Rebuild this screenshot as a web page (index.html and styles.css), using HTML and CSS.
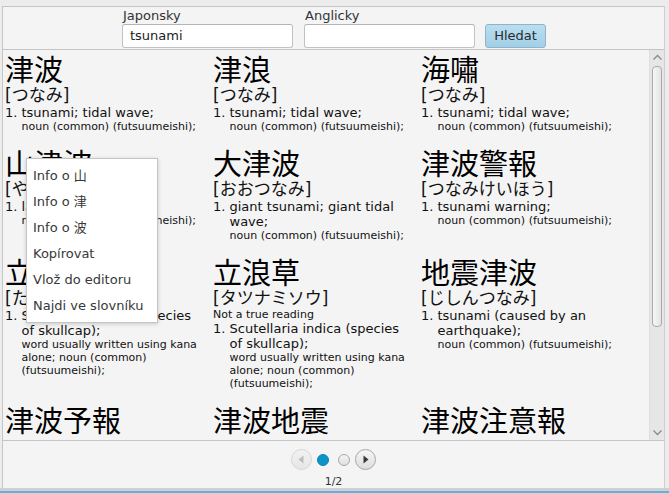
FILE: index.html
```html
<!DOCTYPE html>
<html>
<head>
<meta charset="utf-8">
<link rel="stylesheet" href="styles.css">
</head>
<body>
<div class="frame">
  <div class="header">
    <div class="field">
      <div class="label">Japonsky</div>
      <div class="input">tsunami</div>
    </div>
    <div class="field">
      <div class="label">Anglicky</div>
      <div class="input"></div>
    </div>
    <div class="button">Hledat</div>
  </div>
  <div class="pane">
    <div class="content">
      <div class="grid">
        <div class="entry">
          <div class="kanji">津波</div>
          <div class="reading">[つなみ]</div>
          <div class="sense"><span class="num">1.</span><div class="sb"><div class="gloss">tsunami; tidal wave;</div><div class="pos">noun (common) (futsuumeishi);</div></div></div>
        </div>
        <div class="entry">
          <div class="kanji">津浪</div>
          <div class="reading">[つなみ]</div>
          <div class="sense"><span class="num">1.</span><div class="sb"><div class="gloss">tsunami; tidal wave;</div><div class="pos">noun (common) (futsuumeishi);</div></div></div>
        </div>
        <div class="entry">
          <div class="kanji">海嘯</div>
          <div class="reading">[つなみ]</div>
          <div class="sense"><span class="num">1.</span><div class="sb"><div class="gloss">tsunami; tidal wave;</div><div class="pos">noun (common) (futsuumeishi);</div></div></div>
        </div>

        <div class="entry">
          <div class="kanji">山津波</div>
          <div class="reading">[やまつなみ]</div>
          <div class="sense"><span class="num">1.</span><div class="sb"><div class="gloss">landslide;</div><div class="pos">noun (common) (futsuumeishi);</div></div></div>
        </div>
        <div class="entry">
          <div class="kanji">大津波</div>
          <div class="reading">[おおつなみ]</div>
          <div class="sense"><span class="num">1.</span><div class="sb"><div class="gloss">giant tsunami; giant tidal wave;</div><div class="pos">noun (common) (futsuumeishi);</div></div></div>
        </div>
        <div class="entry">
          <div class="kanji">津波警報</div>
          <div class="reading">[つなみけいほう]</div>
          <div class="sense"><span class="num">1.</span><div class="sb"><div class="gloss">tsunami warning;</div><div class="pos">noun (common) (futsuumeishi);</div></div></div>
        </div>

        <div class="entry">
          <div class="kanji">立浪草</div>
          <div class="reading">[たつなみそう]</div>
          <div class="sense"><span class="num">1.</span><div class="sb"><div class="gloss">Scutellaria indica (species of skullcap);</div><div class="pos">word usually written using kana alone; noun (common) (futsuumeishi);</div></div></div>
        </div>
        <div class="entry">
          <div class="kanji">立浪草</div>
          <div class="reading">[タツナミソウ]</div>
          <div class="note">Not a true reading</div>
          <div class="sense"><span class="num">1.</span><div class="sb"><div class="gloss">Scutellaria indica (species of skullcap);</div><div class="pos">word usually written using kana alone; noun (common) (futsuumeishi);</div></div></div>
        </div>
        <div class="entry">
          <div class="kanji">地震津波</div>
          <div class="reading">[じしんつなみ]</div>
          <div class="sense"><span class="num">1.</span><div class="sb"><div class="gloss">tsunami (caused by an earthquake);</div><div class="pos">noun (common) (futsuumeishi);</div></div></div>
        </div>

        <div class="entry">
          <div class="kanji">津波予報</div>
        </div>
        <div class="entry">
          <div class="kanji">津波地震</div>
        </div>
        <div class="entry">
          <div class="kanji">津波注意報</div>
        </div>
      </div>
    </div>
    <div class="scrollbar">
      <svg class="arrow" width="11" height="7" viewBox="0 0 11 7"><path d="M1.5 5.5 L5.5 1.5 L9.5 5.5" fill="none" stroke="#8a8a8a" stroke-width="1.3"/></svg>
      <div class="track"><div class="thumb"></div></div>
      <svg class="arrow" width="11" height="7" viewBox="0 0 11 7"><path d="M1.5 1.5 L5.5 5.5 L9.5 1.5" fill="none" stroke="#8a8a8a" stroke-width="1.3"/></svg>
    </div>
  </div>
  <div class="pager">
    <div class="controls">
      <div class="nav disabled"><svg width="21" height="21" viewBox="0 0 21 21"><path d="M12.5 6.5 L7.5 10.5 L12.5 14.5 Z" fill="#bdbdbd"/></svg></div>
      <div class="dot active"></div>
      <div class="dot"></div>
      <div class="nav"><svg width="21" height="21" viewBox="0 0 21 21"><path d="M8.5 6.5 L13.5 10.5 L8.5 14.5 Z" fill="#3a3a3a"/></svg></div>
    </div>
    <div class="page">1/2</div>
  </div>
</div>
<div class="status"></div>

<div class="menu">
  <div class="item">Info o 山</div>
  <div class="item">Info o 津</div>
  <div class="item">Info o 波</div>
  <div class="item">Kopírovat</div>
  <div class="item">Vlož do editoru</div>
  <div class="item">Najdi ve slovníku</div>
</div>
</body>
</html>
```

FILE: styles.css
```css
html, body {
  margin: 0;
  padding: 0;
}
body {
  width: 669px;
  height: 493px;
  overflow: hidden;
  background: #ececec;
  font-family: "DejaVu Sans", "Noto Sans CJK JP", sans-serif;
  color: #111;
  position: relative;
}
.frame {
  margin: 6px 4px 0 2px;
  height: 482px;
  box-sizing: border-box;
  border-top: 1px solid #c6c6c6;
  border-left: 1px solid #c6c6c6;
  border-right: 1px solid #cfcfcf;
  background: #f4f4f4;
  display: flex;
  flex-direction: column;
}
.header {
  display: flex;
  align-items: flex-end;
  padding: 1px 0 1px 119px;
  gap: 11px;
}
.field {
  width: 171px;
  display: flex;
  flex-direction: column;
}
.label {
  font-size: 13px;
  line-height: 15px;
  color: #333;
  padding-left: 1px;
}
.input {
  margin-top: 1px;
  height: 24px;
  box-sizing: border-box;
  background: #fff;
  border: 1px solid #c2c2c2;
  border-top-color: #b4b4b4;
  border-radius: 3px;
  font-size: 13px;
  line-height: 22px;
  padding-left: 7px;
  color: #222;
}
.button {
  margin-left: -1px;
  width: 61px;
  height: 24px;
  box-sizing: border-box;
  border: 1px solid #8fb3c9;
  border-radius: 3px;
  background: linear-gradient(#b9def0, #a2d0e7);
  font-size: 13px;
  line-height: 22px;
  text-align: center;
  color: #2a2a2a;
}
.pane {
  flex: 1;
  min-height: 0;
  display: flex;
  border-top: 1px solid #c4c4c4;
  border-bottom: 1px solid #c4c4c4;
}
.content {
  flex: 1;
  min-width: 0;
  overflow: hidden;
  padding: 1px 0 0 2px;
}
.grid {
  display: grid;
  grid-template-columns: 198px 198px 198px;
  column-gap: 10px;
  row-gap: 12px;
}
.kanji {
  font-family: "Noto Sans CJK JP", sans-serif;
  font-size: 29px;
  line-height: 34px;
  color: #000;
  white-space: nowrap;
}
.reading {
  font-size: 17px;
  line-height: 20px;
  color: #111;
  white-space: nowrap;
}
.note {
  font-size: 11px;
  line-height: 13px;
}
.sense {
  display: flex;
}
.num {
  flex: none;
  width: 16.5px;
  font-size: 13px;
  line-height: 15px;
}
.sb {
  flex: 1;
  min-width: 0;
}
.gloss {
  font-size: 13px;
  line-height: 15px;
}
.pos {
  font-size: 11px;
  line-height: 13px;
}
.scrollbar {
  width: 15px;
  background: #e6e6e6;
  border-left: 1px solid #dedede;
  box-sizing: border-box;
  display: flex;
  flex-direction: column;
  align-items: center;
}
.scrollbar .arrow {
  flex: none;
  margin: 4px 0;
}
.track {
  flex: 1;
  width: 100%;
  display: flex;
  justify-content: center;
}
.thumb {
  width: 10px;
  height: 261px;
  margin-top: 1px;
  box-sizing: border-box;
  border: 1px solid #a9a9a9;
  border-radius: 4px;
  background: linear-gradient(90deg, #f6f6f6, #e4e4e4);
}
.pager {
  display: flex;
  flex-direction: column;
  align-items: center;
}
.controls {
  margin-top: 8px;
  display: flex;
  align-items: center;
  height: 21px;
}
.nav {
  width: 21px;
  height: 21px;
  box-sizing: border-box;
  border-radius: 50%;
  border: 1px solid #a6a6a6;
  background: linear-gradient(#f7f7f7, #dddddd);
  display: flex;
}
.nav svg {
  margin: -1px;
}
.nav.disabled {
  border-color: #d6d6d6;
  background: linear-gradient(#f2f2f2, #e6e6e6);
}
.dot {
  width: 12px;
  height: 12px;
  box-sizing: border-box;
  border-radius: 50%;
  border: 1px solid #a8a8a8;
  background: linear-gradient(#f4f4f4, #e0e0e0);
  margin-left: 9px;
}
.dot.active {
  margin-left: 5px;
  border-color: #0a86b8;
  background: #0c93c8;
}
.dot + .nav {
  margin-left: 5px;
}
.page {
  margin-top: 5px;
  font-size: 11px;
  line-height: 13px;
  color: #333;
}
.status {
  height: 5px;
  background: linear-gradient(#d0d0d0 0, #d0d0d0 3px, #5bb4de 3px);
}
.menu {
  position: absolute;
  left: 26px;
  top: 158px;
  width: 132px;
  box-sizing: border-box;
  padding: 4px 0 3px;
  background: #fff;
  border: 1px solid #c4c4c4;
  box-shadow: 0 1px 4px rgba(0, 0, 0, 0.18);
}
.item {
  height: 26px;
  line-height: 26px;
  padding-left: 6px;
  font-size: 13px;
  color: #383838;
  white-space: nowrap;
}
```
